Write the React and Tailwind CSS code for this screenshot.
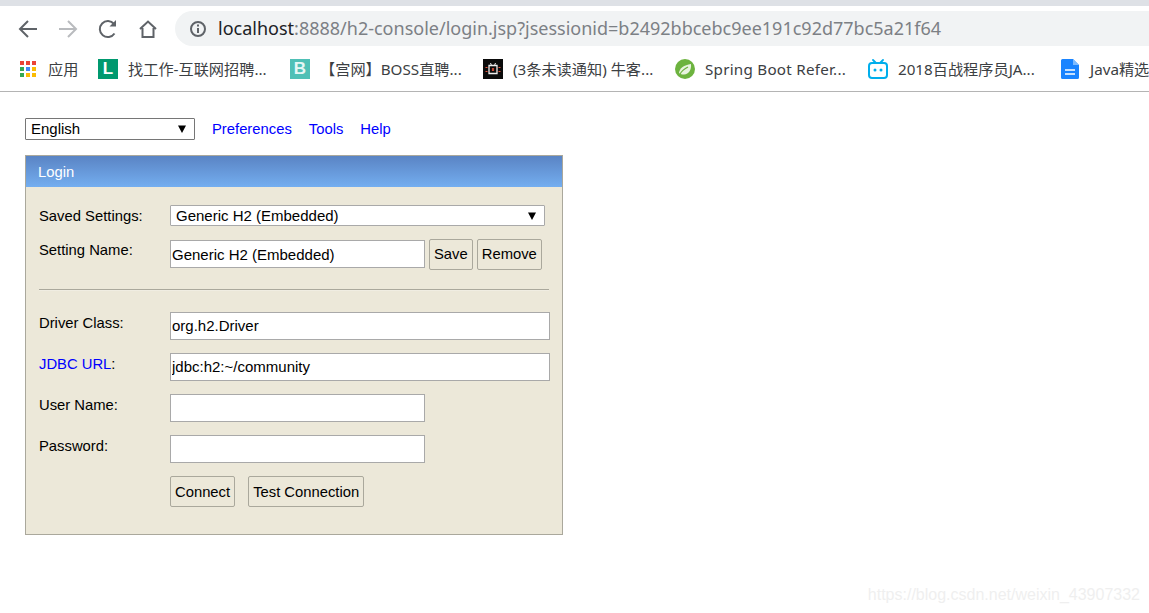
import React from 'react';

const uiFont = 'font-["Noto_Sans","Noto_Sans_CJK_SC",sans-serif]';

const Bookmark = ({ icon, label, width, gap = 'gap-[10px]', textClass = '' }) => (
    <div className={`flex items-center shrink-0 ${gap}`}>
        {icon}
        <span className={`text-[15.2px] leading-[20px] text-[#3c4043] whitespace-nowrap ${width} ${textClass}`}>{label}</span>
    </div>
);

const AppsIcon = () => (
    <svg width="16" height="16" viewBox="0 0 16 16">
        {[
            ['#ea4335', '#ea4335', '#ea4335'],
            ['#34a853', '#4285f4', '#fbbc04'],
            ['#34a853', '#fbbc04', '#fbbc04'],
        ].map((row, y) =>
            row.map((fill, x) => <rect key={`${x}-${y}`} x={x * 6} y={y * 6} width="4" height="4" fill={fill} />)
        )}
    </svg>
);

const LagouIcon = () => (
    <div className="w-[20px] h-[20px] bg-[#00996f] flex items-center justify-center text-white text-[17px] font-bold font-['Liberation_Sans',sans-serif] leading-none">L</div>
);

const BossIcon = () => (
    <div className="w-[20px] h-[20px] bg-[#4fc0b6] flex items-center justify-center text-[#e6f7f5] text-[17px] font-bold font-['Liberation_Sans',sans-serif] leading-none">B</div>
);

const NowcoderIcon = () => (
    <svg width="20" height="20" viewBox="0 0 20 20">
        <rect width="20" height="20" fill="#0b0b0b" />
        <path d="M6 6.500h8v8H6z" fill="none" stroke="#eee" strokeWidth="1.300" />
        <path d="M7.500 4l1 2.500M12.500 4l-1 2.500" stroke="#eee" strokeWidth="1" />
        <path d="M2.500 8.500h2M2.500 12.500h2M15.500 8.500h2M15.500 12.500h2" stroke="#e8503a" strokeWidth="1.200" />
        <path d="M9 9.500l2 2M11 9.500l-2 2" stroke="#e8503a" strokeWidth="1.200" />
    </svg>
);

const SpringIcon = () => (
    <svg width="20" height="20" viewBox="0 0 20 20">
        <circle cx="10" cy="10" r="10" fill="#6db33f" />
        <path d="M4 14c.5-5 5-8 12-9 .5 6-2 10-7 10.500-1.700.1-3.500-.300-5-1.500z" fill="#e8f3df" />
        <path d="M5 15c2-3.500 5-5.500 8-7" stroke="#6db33f" strokeWidth="1.200" fill="none" />
    </svg>
);

const BiliIcon = () => (
    <svg width="20" height="20" viewBox="0 0 20 20">
        <path d="M5 1l3 3M15 1l-3 3" stroke="#00aeec" strokeWidth="1.800" strokeLinecap="round" />
        <rect x="1" y="4" width="18" height="15" rx="3" fill="none" stroke="#00aeec" strokeWidth="2" />
        <circle cx="7" cy="11" r="1.500" fill="#00aeec" />
        <circle cx="13" cy="11" r="1.500" fill="#00aeec" />
    </svg>
);

const DocIcon = () => (
    <svg width="18" height="20" viewBox="0 0 18 20">
        <path d="M0 1.500A1.500 1.500 0 0 1 1.500 0H12l6 6v12.500a1.500 1.500 0 0 1-1.500 1.500h-15A1.500 1.500 0 0 1 0 18.500z" fill="#1a84ff" />
        <path d="M12 0l6 6h-6z" fill="#7dbbff" />
        <path d="M4 11h10M4 15h10" stroke="#fff" strokeWidth="1.600" />
    </svg>
);

const Arrow = () => (
    <svg className="shrink-0" width="8" height="8" viewBox="0 0 8 8">
        <path d="M0 0.500h8L4 8z" fill="#000" />
    </svg>
);

const Field = ({ label, value = '', wide, className = '' }) => (
    <div className={`flex ${className}`}>
        <span className="w-[131px] shrink-0 pt-[1px] leading-[20px] text-black">{label}</span>
        <input
            readOnly
            defaultValue={value}
            className={`h-[28px] bg-white border border-[#a9a9a9] px-[1px] pb-[2px] outline-none text-[15px] text-black ${wide ? 'w-[380px]' : 'w-[255px]'}`}
        />
    </div>
);

const Btn = ({ children, className = '' }) => (
    <button className={`h-[31px] px-[4px] bg-[#ece8d9] border border-[#aaa89c] rounded-[2px] text-black ${className}`}>
        {children}
    </button>
);

const App = () => {
    return (
        <div className="relative h-[613px] overflow-hidden bg-white font-['Liberation_Sans',sans-serif] text-[14.8px]">
            {/* Browser chrome */}
            <div className="h-[6px] bg-[#dee1e6]" />
            <div className="flex items-center h-[40px] pt-[5px]">
                <div className="flex items-center w-[175px] shrink-0 pl-[18px] gap-[20px]">
                    <svg width="20" height="20" viewBox="0 0 20 20" fill="none" stroke="#5f6368" strokeWidth="2">
                        <path d="M19 10H2M10 2l-8 8 8 8" />
                    </svg>
                    <svg width="20" height="20" viewBox="0 0 20 20" fill="none" stroke="#b9bbbe" strokeWidth="2">
                        <path d="M1 10h17M10 2l8 8-8 8" />
                    </svg>
                    <svg width="20" height="20" viewBox="0 0 20 20" fill="none" stroke="#5f6368" strokeWidth="2">
                        <path d="M16.500 14.500A8 8 0 1 1 16 5" />
                        <path d="M18 1v6.500h-6.500z" fill="#5f6368" stroke="none" />
                    </svg>
                    <svg width="20" height="20" viewBox="0 0 20 20" fill="none" stroke="#5f6368" strokeWidth="2">
                        <path d="M2 10l8-7.500 8 7.500M4.500 9v9h11V9" />
                    </svg>
                </div>
                <div className="flex-1 h-[35px] bg-[#f1f3f4] rounded-l-full flex items-center pl-[14px] whitespace-nowrap overflow-hidden">
                    <svg width="18" height="18" viewBox="0 0 18 18" fill="none" stroke="#5f6368" strokeWidth="2">
                        <circle cx="9" cy="9" r="7" />
                        <path d="M9 8v5M9 4.500v2" />
                    </svg>
                    <span className={`ml-[11px] text-[18px] text-[#7c8085] ${uiFont}`}>
                        <span className="text-[#202124]">localhost</span>:8888/h2-console/login.jsp?jsessionid=b2492bbcebc9ee191c92d77bc5a21f64
                    </span>
                </div>
            </div>
            <div className={`flex items-center h-[46px] pl-[20px] border-b border-[#b4b4b4] overflow-hidden ${uiFont}`}>
                <Bookmark icon={<AppsIcon />} label="应用" width="w-[29px]" gap="gap-[12px]" />
                <div className="ml-[21px]"><Bookmark icon={<LagouIcon />} label="找工作-互联网招聘..." width="w-[139px]" /></div>
                <div className="ml-[23px]"><Bookmark icon={<BossIcon />} label="【宫网】BOSS直聘..." width="w-[139px]" /></div>
                <div className="ml-[24px]"><Bookmark icon={<NowcoderIcon />} label="(3条未读通知) 牛客..." width="w-[140px]" /></div>
                <div className="ml-[22px]"><Bookmark icon={<SpringIcon />} label="Spring Boot Refer..." width="w-[140px]" textClass="tracking-[0.25px]" /></div>
                <div className="ml-[23px]"><Bookmark icon={<BiliIcon />} label="2018百战程序员JA..." width="w-[139px]" /></div>
                <div className="ml-[24px]"><Bookmark icon={<DocIcon />} label="Java精选" width="w-[70px]" gap="gap-[11px]" /></div>
            </div>

            {/* H2 console page */}
            <div className="pl-[25px] pt-[26px]">
                <div className="flex items-center h-[22px]">
                    <div className="w-[170px] h-[22px] border border-[#767676] rounded-[1px] flex items-center justify-between pl-[5px] pr-[8px] text-[15px] text-black">
                        <span>English</span>
                        <Arrow />
                    </div>
                    <a className="ml-[17px] text-[#0000ff]">Preferences</a>
                    <a className="ml-[17px] text-[#0000ff]">Tools</a>
                    <a className="ml-[17px] text-[#0000ff]">Help</a>
                </div>

                <div className="mt-[15px] w-[538px] h-[380px] border border-[#aaa89c] bg-[#ece8d9]">
                    <div className="h-[31px] pl-[12px] pt-[1px] flex items-center text-white bg-gradient-to-b from-[#5a84c4] to-[#74aef0]">
                        Login
                    </div>
                    <div className="pl-[13px] pt-[18px]">
                        <div className="flex items-center h-[21px]">
                            <span className="w-[131px] shrink-0 pt-[1px] text-black">Saved Settings:</span>
                            <div className="w-[375px] h-[21px] bg-white border border-[#a9a9a9] rounded-[1px] flex items-center justify-between pl-[5px] pr-[8px] text-[15px] text-black">
                                <span className="pt-[1px]">Generic H2 (Embedded)</span>
                                <Arrow />
                            </div>
                        </div>
                        <div className="flex mt-[13px]">
                            <span className="w-[131px] shrink-0 pt-[1px] leading-[20px] text-black">Setting Name:</span>
                            <input
                                readOnly
                                defaultValue="Generic H2 (Embedded)"
                                className="mt-[1px] h-[28px] w-[255px] bg-white border border-[#a9a9a9] px-[1px] outline-none text-[15px] text-black"
                            />
                            <Btn className="ml-[4px]">Save</Btn>
                            <Btn className="ml-[4px]">Remove</Btn>
                        </div>
                        <div className="mt-[19px] w-[510px] h-[2px] border-t border-[#aaa89c] bg-[#f0ede2]" />
                        <Field className="mt-[21px]" label="Driver Class:" value="org.h2.Driver" wide />
                        <Field
                            className="mt-[13px]"
                            label={<><span className="text-[#0000ff]">JDBC URL</span>:</>}
                            value="jdbc:h2:~/community"
                            wide
                        />
                        <Field className="mt-[13px]" label="User Name:" />
                        <Field className="mt-[13px]" label="Password:" />
                        <div className="flex mt-[13px] ml-[131px]">
                            <Btn className="pt-[2px]">Connect</Btn>
                            <Btn className="ml-[13px] pt-[2px]">Test Connection</Btn>
                        </div>
                    </div>
                </div>
            </div>

            {/* CSDN watermark */}
            <div className="absolute right-[9px] bottom-[8px] text-[16px] leading-[20px] text-[#efefef] whitespace-nowrap">
                https://blog.csdn.net/weixin_43907332
            </div>
        </div>
    );
};

export default App;
